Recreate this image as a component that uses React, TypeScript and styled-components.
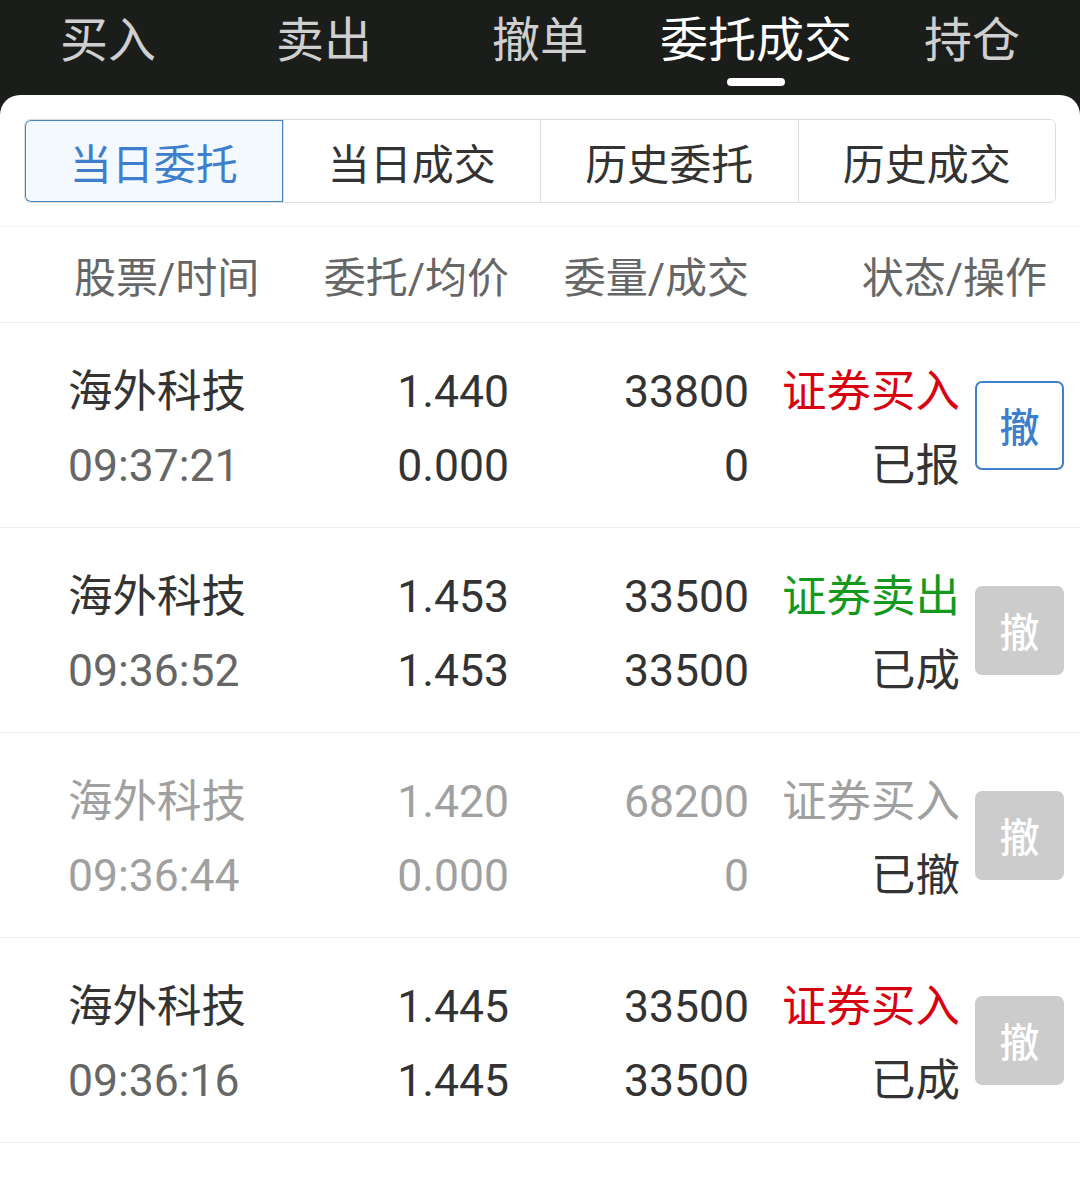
import React, { useState } from 'react';
import styled, { createGlobalStyle } from 'styled-components';

const GlobalStyle = createGlobalStyle`
  html, body {
    margin: 0;
    padding: 0;
    background: #1b1d1b;
  }
  body {
    font-family: Roboto, "Noto Sans CJK SC", sans-serif;
  }
`;

const Page = styled.div`
  width: 1080px;
  min-height: 1189px;
  background: #1b1d1b;
  display: flex;
  flex-direction: column;
`;

const TopTabs = styled.nav`
  height: 95px;
  display: grid;
  grid-template-columns: repeat(5, 1fr);
`;

const TopTab = styled.div<{ $active?: boolean }>`
  display: flex;
  flex-direction: column;
  align-items: center;
  padding-top: 14px;
  font-size: 48px;
  line-height: 54px;
  color: ${(props) => (props.$active ? '#ffffff' : '#cfcfcf')};
`;

const Indicator = styled.span<{ $active?: boolean }>`
  margin-top: 10px;
  width: 58px;
  height: 8px;
  border-radius: 4px;
  background: ${(props) => (props.$active ? '#ffffff' : 'transparent')};
`;

const Panel = styled.main`
  flex: 1;
  background: #ffffff;
  border-radius: 20px 20px 0 0;
  display: flex;
  flex-direction: column;
`;

const Segments = styled.div`
  margin: 24px 24px 23px;
  height: 84px;
  display: grid;
  grid-template-columns: repeat(4, 1fr);
  border: 1px solid #dcdcdc;
  border-radius: 6px;
  box-sizing: border-box;
  overflow: hidden;
`;

const Segment = styled.div<{ $active?: boolean }>`
  display: flex;
  align-items: center;
  justify-content: center;
  font-size: 42px;
  color: ${(props) => (props.$active ? '#3d7fcc' : '#333333')};
  background: ${(props) => (props.$active ? '#f3f9ff' : '#ffffff')};
  border-left: 1px solid #dcdcdc;
  box-shadow: ${(props) => (props.$active ? 'inset 0 0 0 1px #4a83c3' : 'none')};
  &:first-child {
    border-left: none;
    border-radius: 6px 0 0 6px;
  }
`;

const HeaderRow = styled.div`
  height: 97px;
  box-sizing: border-box;
  border-top: 1px solid #f6f6f6;
  border-bottom: 1px solid #ececec;
  display: grid;
  grid-template-columns: 235px 200px 240px 1fr;
  align-items: center;
  padding: 0 33px 0 74px;
  font-size: 42px;
  color: #666666;
`;

const HeadCell = styled.div<{ $left?: boolean }>`
  text-align: ${(props) => (props.$left ? 'left' : 'right')};
`;

const Row = styled.div`
  height: 205px;
  box-sizing: border-box;
  border-bottom: 1px solid #ececec;
  display: grid;
  grid-template-columns: 241px 200px 240px 211px 104px;
  align-items: center;
  padding: 0 16px 0 68px;
`;

const Cell = styled.div<{ $left?: boolean }>`
  display: flex;
  flex-direction: column;
  align-items: ${(props) => (props.$left ? 'flex-start' : 'flex-end')};
  font-size: 44.5px;
  line-height: 74px;
  padding-top: 8px;
`;

const Line = styled.span<{ $color: string }>`
  color: ${(props) => props.$color};
  white-space: nowrap;
`;

const CancelButton = styled.button<{ $enabled?: boolean }>`
  justify-self: end;
  width: 89px;
  height: 89px;
  box-sizing: border-box;
  padding: 0;
  border-radius: 7px;
  font-family: Roboto, "Noto Sans CJK SC", sans-serif;
  font-size: 40px;
  font-weight: 500;
  border: ${(props) => (props.$enabled ? '2px solid #3f80c8' : 'none')};
  background: ${(props) => (props.$enabled ? '#ffffff' : '#cccccc')};
  color: ${(props) => (props.$enabled ? '#3d7fcc' : '#ffffff')};
`;

interface OrderInterface {
  id: number;
  name: string;
  time: string;
  price: string;
  avg: string;
  qty: string;
  filled: string;
  side: string;
  sideColor: string;
  status: string;
  muted: boolean;
  canCancel: boolean;
}

const orders: OrderInterface[] = [
  { id: 1, name: '海外科技', time: '09:37:21', price: '1.440', avg: '0.000', qty: '33800', filled: '0', side: '证券买入', sideColor: '#d9000f', status: '已报', muted: false, canCancel: true },
  { id: 2, name: '海外科技', time: '09:36:52', price: '1.453', avg: '1.453', qty: '33500', filled: '33500', side: '证券卖出', sideColor: '#14991d', status: '已成', muted: false, canCancel: false },
  { id: 3, name: '海外科技', time: '09:36:44', price: '1.420', avg: '0.000', qty: '68200', filled: '0', side: '证券买入', sideColor: '#a0a0a0', status: '已撤', muted: true, canCancel: false },
  { id: 4, name: '海外科技', time: '09:36:16', price: '1.445', avg: '1.445', qty: '33500', filled: '33500', side: '证券买入', sideColor: '#d9000f', status: '已成', muted: false, canCancel: false },
];

const tabs = ['买入', '卖出', '撤单', '委托成交', '持仓'];
const segments = ['当日委托', '当日成交', '历史委托', '历史成交'];

const App = () => {
  const [tab] = useState<number>(3);
  const [segment, setSegment] = useState<number>(0);

  return (
    <Page>
      <GlobalStyle />
      <TopTabs>
        {tabs.map((t, i) => (
          <TopTab key={t} $active={i === tab}>
            {t}
            <Indicator $active={i === tab} />
          </TopTab>
        ))}
      </TopTabs>
      <Panel>
        <Segments>
          {segments.map((s, i) => (
            <Segment key={s} $active={i === segment} onClick={() => setSegment(i)}>
              {s}
            </Segment>
          ))}
        </Segments>
        <HeaderRow>
          <HeadCell $left>股票/时间</HeadCell>
          <HeadCell>委托/均价</HeadCell>
          <HeadCell>委量/成交</HeadCell>
          <HeadCell>状态/操作</HeadCell>
        </HeaderRow>
        {orders.map((o) => {
          const main = o.muted ? '#a0a0a0' : '#333333';
          const sub = o.muted ? '#a0a0a0' : '#666666';
          return (
            <Row key={o.id}>
              <Cell $left>
                <Line $color={main}>{o.name}</Line>
                <Line $color={sub}>{o.time}</Line>
              </Cell>
              <Cell>
                <Line $color={main}>{o.price}</Line>
                <Line $color={main}>{o.avg}</Line>
              </Cell>
              <Cell>
                <Line $color={main}>{o.qty}</Line>
                <Line $color={main}>{o.filled}</Line>
              </Cell>
              <Cell>
                <Line $color={o.sideColor}>{o.side}</Line>
                <Line $color="#333333">{o.status}</Line>
              </Cell>
              <CancelButton $enabled={o.canCancel}>撤</CancelButton>
            </Row>
          );
        })}
      </Panel>
    </Page>
  );
};

export default App;
